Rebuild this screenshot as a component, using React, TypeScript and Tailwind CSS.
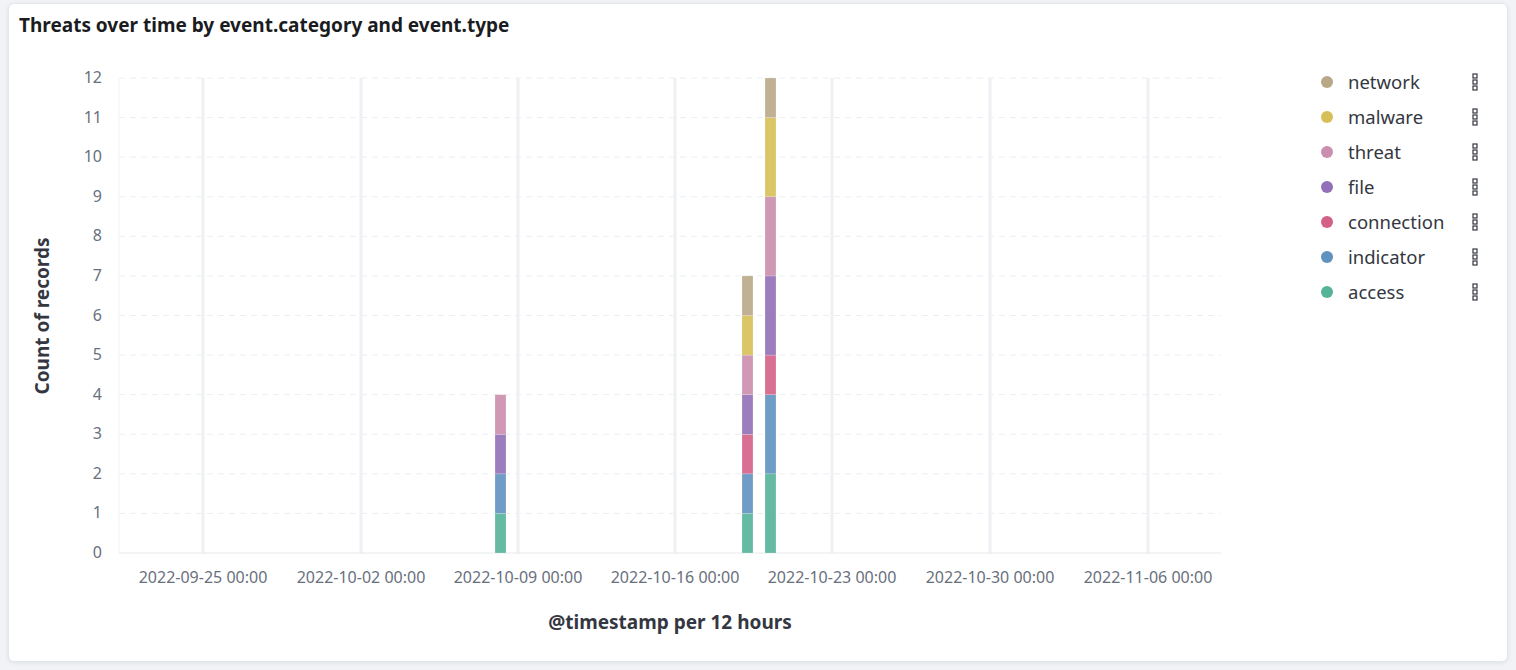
const series = [
  { name: 'network', color: '#b9a888' },
  { name: 'malware', color: '#d6bf57' },
  { name: 'threat', color: '#ca8eae' },
  { name: 'file', color: '#9170b8' },
  { name: 'connection', color: '#d36086' },
  { name: 'indicator', color: '#6092c0' },
  { name: 'access', color: '#54b399' },
];

// stacks from bottom: access, indicator, connection, file, threat, malware, network
const bars: { x: number; values: Record<string, number> }[] = [
  { x: 494, values: { access: 1, indicator: 1, file: 1, threat: 1 } },
  { x: 741, values: { access: 1, indicator: 1, connection: 1, file: 1, threat: 1, malware: 1, network: 1 } },
  { x: 764, values: { access: 2, indicator: 2, connection: 1, file: 2, threat: 2, malware: 2, network: 1 } },
];

const order = ['access', 'indicator', 'connection', 'file', 'threat', 'malware', 'network'];
const colorOf = (n: string) => series.find(s => s.name === n)!.color;

const X0 = 118;
const X1 = 1220;
const Y0 = 552;
const UNIT = (552 - 77) / 12;
const xTicks = [
  { x: 202, label: '2022-09-25 00:00' },
  { x: 360, label: '2022-10-02 00:00' },
  { x: 517, label: '2022-10-09 00:00' },
  { x: 674, label: '2022-10-16 00:00' },
  { x: 831, label: '2022-10-23 00:00' },
  { x: 989, label: '2022-10-30 00:00' },
  { x: 1147, label: '2022-11-06 00:00' },
];

function Chart() {
  return (
    <svg width={1270} height={610} className="block">
      <g transform="translate(-8,-40)">
        {Array.from({ length: 12 }, (_, i) => i + 1).map(i => (
          <line key={i} x1={X0} x2={X1} y1={Y0 - i * UNIT} y2={Y0 - i * UNIT} stroke="#eceef2" strokeWidth={1} strokeDasharray="6 5" />
        ))}
        {xTicks.map(t => (
          <line key={t.x} x1={t.x} x2={t.x} y1={77} y2={Y0} stroke="#eef0f3" strokeWidth={3} />
        ))}
        <line x1={X0} x2={X1} y1={Y0} y2={Y0} stroke="#e6e8ec" strokeWidth={1} />
        <line x1={X0} x2={X0} y1={77} y2={Y0} stroke="#f1f2f5" strokeWidth={1} />
        {Array.from({ length: 13 }, (_, i) => i).map(i => (
          <text key={i} x={101} y={Y0 - i * UNIT + 5} textAnchor="end" fontSize={16} fill="#69707d">
            {i}
          </text>
        ))}
        {xTicks.map(t => (
          <text key={t.label} x={t.x} y={582} textAnchor="middle" fontSize={16} fill="#69707d">
            {t.label}
          </text>
        ))}
        {bars.map(b => {
          let acc = 0;
          return order.map(n => {
            const v = b.values[n] ?? 0;
            if (!v) return null;
            const y = Y0 - (acc + v) * UNIT;
            acc += v;
            return <rect key={b.x + n} x={b.x} y={y} width={11} height={v * UNIT} fill={colorOf(n)} fillOpacity={0.9} stroke="#fff" strokeOpacity={0.4} strokeWidth={0.5} />;
          });
        })}
        <text x={48} y={315} transform="rotate(-90 48 315)" textAnchor="middle" fontSize={19} fontWeight={700} fill="#343741">
          Count of records
        </text>
        <text x={669} y={628} textAnchor="middle" fontSize={19} fontWeight={700} fill="#343741">
          @timestamp per 12 hours
        </text>
      </g>
    </svg>
  );
}

function MenuDots() {
  return (
    <svg width={6} height={18} viewBox="0 0 6 18">
      {[1, 7, 13].map(y => (
        <rect key={y} x={1} y={y} width={4} height={4} fill="none" stroke="#343741" strokeWidth={1.2} />
      ))}
    </svg>
  );
}

export default function App() {
  return (
    <div className="h-[670px] w-[1516px] bg-[#f1f3f7] px-[8px] pt-[3px] font-['Inter','Liberation_Sans',sans-serif]">
      <div className="h-[659px] rounded-[6px] border border-[#e3e6ec] bg-white shadow-[0_1px_4px_rgba(0,0,0,0.08)]">
        <div className="px-[10px] pt-[9px] text-[19px] font-bold leading-[24px] text-[#1a1c21]">
          Threats over time by event.category and event.type
        </div>
        <div className="mt-[4px] flex">
          <Chart />
          <div className="ml-[42px] mt-[30px] flex flex-col gap-[13px]">
            {series.map(s => (
              <div key={s.name} className="flex h-[22px] items-center">
                <span className="h-[12px] w-[12px] rounded-full" style={{ backgroundColor: s.color }} />
                <span className="ml-[15px] w-[124px] text-[18.5px] text-[#343741]">{s.name}</span>
                <MenuDots />
              </div>
            ))}
          </div>
        </div>
      </div>
    </div>
  );
}
